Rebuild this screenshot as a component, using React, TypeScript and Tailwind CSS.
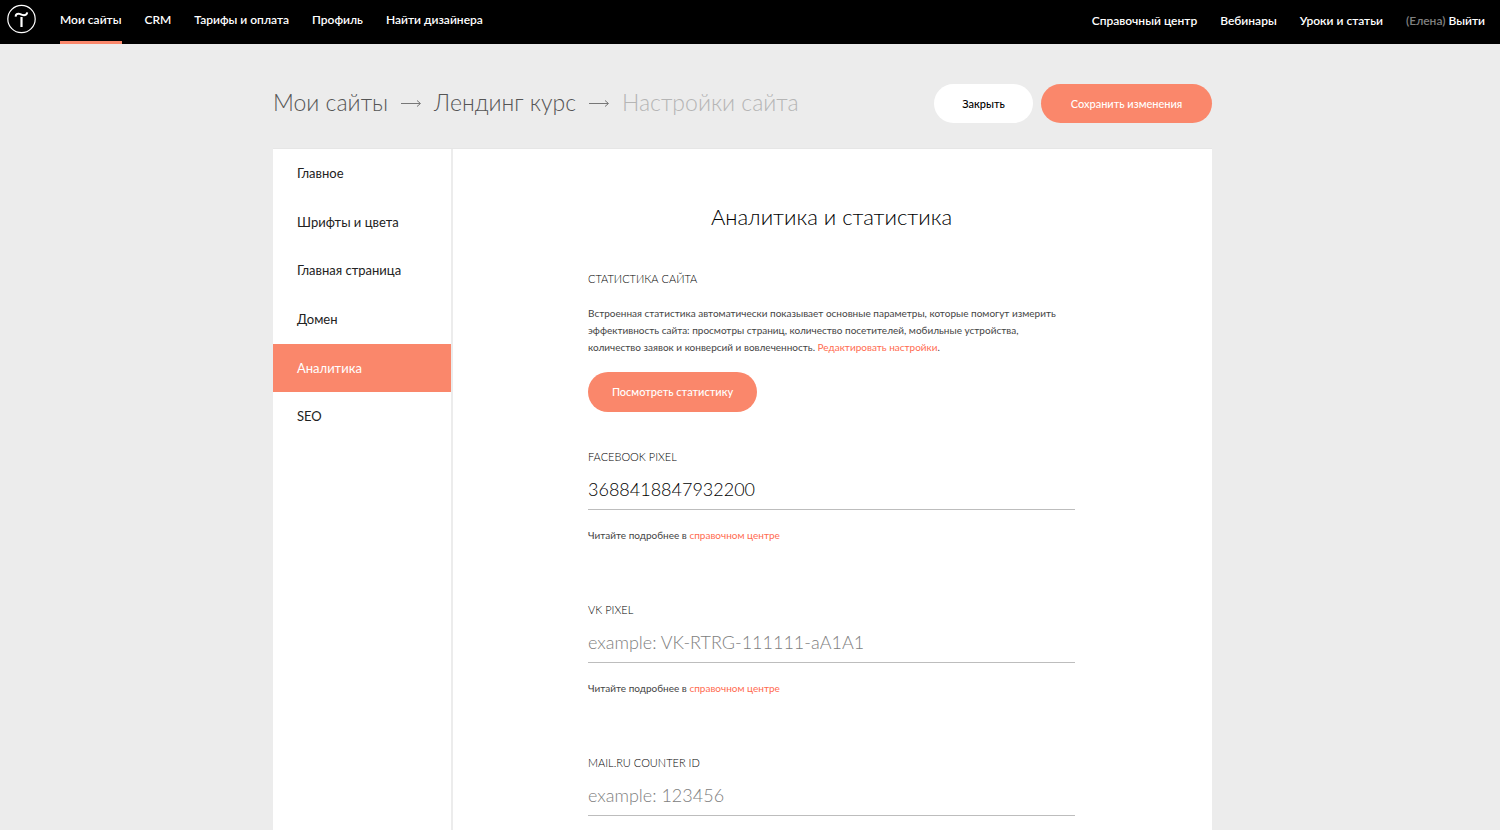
import React from "react";

const mainLinks = ["Мои сайты", "CRM", "Тарифы и оплата", "Профиль", "Найти дизайнера"];
const helpLinks = ["Справочный центр", "Вебинары", "Уроки и статьи"];
const sections = ["Главное", "Шрифты и цвета", "Главная страница", "Домен", "Аналитика", "SEO"];

function Logo() {
  return (
    <svg viewBox="0 0 30 30" className="size-[30px]" fill="none" stroke="#fff" aria-hidden="true">
      <circle cx="14.500" cy="15" r="13.700" strokeWidth="1.200" />
      <path d="M8.600 12.600c.1-2.400 1.700-3.400 4-2.700 1.300.4 2.200 1 3.600 1.200 2.200.3 3.800-.8 4-2.800" strokeWidth="2" />
      <path d="M14.500 13v10" strokeWidth="2.200" />
    </svg>
  );
}

function Arrow() {
  return (
    <svg viewBox="0 0 22 10" className="h-[10px] w-[22px] shrink-0" fill="none" stroke="#777" aria-hidden="true">
      <path d="M1 5.500h19M17 2.500l3.500 3-3.500 3" strokeWidth="1" />
    </svg>
  );
}

type FieldProps = { id: string; label: string; value?: string; placeholder?: string; help?: boolean };

function Field({ id, label, value, placeholder, help }: FieldProps) {
  return (
    <div className="flex flex-col">
      <label htmlFor={id} className="text-[11px] leading-4 font-light uppercase text-black">
        {label}
      </label>
      <input
        id={id}
        type="text"
        defaultValue={value}
        placeholder={placeholder}
        className="mt-1 h-[41px] w-full border-b border-[#bdbdbd] bg-transparent pb-px text-lg font-light text-black outline-none placeholder:text-[#808080]"
      />
      {help && (
        <p className="mt-[17px] mb-[58px] text-[10px] leading-[17px] text-[#444]">
          Читайте подробнее в{" "}
          <a href="#help" className="text-[#ff6b50]">
            справочном центре
          </a>
        </p>
      )}
    </div>
  );
}

export default function App() {
  return (
    <div className="flex min-h-screen flex-col bg-[#ececec] font-['Lato','Noto_Sans',sans-serif]">
      <header className="flex h-11 shrink-0 items-stretch bg-black pr-[15px] pl-[7px] text-xs font-semibold text-white">
        <a href="#home" aria-label="Tilda" className="mt-1">
          <Logo />
        </a>
        <nav className="ml-[23px] flex gap-[23px]">
          {mainLinks.map((t, i) => (
            <a
              key={t}
              href="#"
              className={
                i === 0
                  ? "border-b-[3px] border-[#fa876b] pt-3 leading-4"
                  : "border-b-[3px] border-transparent pt-3 leading-4"
              }
            >
              {t}
            </a>
          ))}
        </nav>
        <nav className="ml-auto flex gap-[23px] pt-[13px] leading-4">
          {helpLinks.map((t) => (
            <a key={t} href="#">
              {t}
            </a>
          ))}
          <a href="#logout">
            <span className="text-[#808080]">(Елена)</span> Выйти
          </a>
        </nav>
      </header>

      <main className="flex flex-1 flex-col pr-[15px]">
        <div className="mx-auto flex w-full max-w-[939px] flex-1 flex-col">
          <div className="flex h-[104px] shrink-0 items-center pt-[15px]">
            <nav className="flex items-center gap-3 pb-[2px] text-[23px] font-light whitespace-nowrap text-[#555]">
              <a href="#sites">Мои сайты</a>
              <Arrow />
              <a href="#project">Лендинг курс</a>
              <Arrow />
              <span className="text-[#b5b5b5]">Настройки сайта</span>
            </nav>
            <div className="ml-auto flex gap-2">
              <button type="button" className="h-[39px] w-[99px] rounded-full bg-white pt-px text-[11px] font-medium text-black">
                Закрыть
              </button>
              <button type="button" className="h-[39px] w-[171px] rounded-full bg-[#fa876b] pt-px text-[11px] font-medium text-white">
                Сохранить изменения
              </button>
            </div>
          </div>

          <div className="flex flex-1 border-t border-[#e6e6e6] bg-white">
            <nav className="w-[180px] shrink-0 border-r-2 border-[#ececec]">
              <div className="grid h-[292px] grid-rows-6">
                {sections.map((t) => (
                  <a
                    key={t}
                    href="#"
                    className={
                      t === "Аналитика"
                        ? "flex items-center bg-[#fa876b] pt-px pl-6 text-[13px] text-white"
                        : "flex items-center pt-px pl-6 text-[13px] text-[#222]"
                    }
                  >
                    {t}
                  </a>
                ))}
              </div>
            </nav>

            <section className="min-w-0 flex-1 pt-[50px] pr-[137px] pl-[135px]">
              <h1 className="text-center text-[22px] leading-9 font-light text-black">Аналитика и статистика</h1>
              <h2 className="mt-9 text-[11px] leading-4 font-light uppercase text-black">Статистика сайта</h2>
              <p className="mt-[18px] text-[10px] leading-[17px] text-[#444]">
                Встроенная статистика автоматически показывает основные параметры, которые помогут измерить
                <br />
                эффективность сайта: просмотры страниц, количество посетителей, мобильные устройства,
                <br />
                количество заявок и конверсий и вовлеченность.{" "}
                <a href="#edit" className="text-[#ff6b50]">
                  Редактировать настройки
                </a>
                .
              </p>
              <button type="button" className="mt-4 h-10 w-[169px] rounded-full bg-[#fa876b] text-[11px] font-medium text-white">
                Посмотреть статистику
              </button>
              <div className="mt-[37px] flex flex-col">
                <Field id="fb" label="Facebook Pixel" value="3688418847932200" help />
                <Field id="vk" label="VK Pixel" placeholder="example: VK-RTRG-111111-aA1A1" help />
                <Field id="mailru" label="Mail.ru counter ID" placeholder="example: 123456" />
              </div>
            </section>
          </div>
        </div>
      </main>
    </div>
  );
}
